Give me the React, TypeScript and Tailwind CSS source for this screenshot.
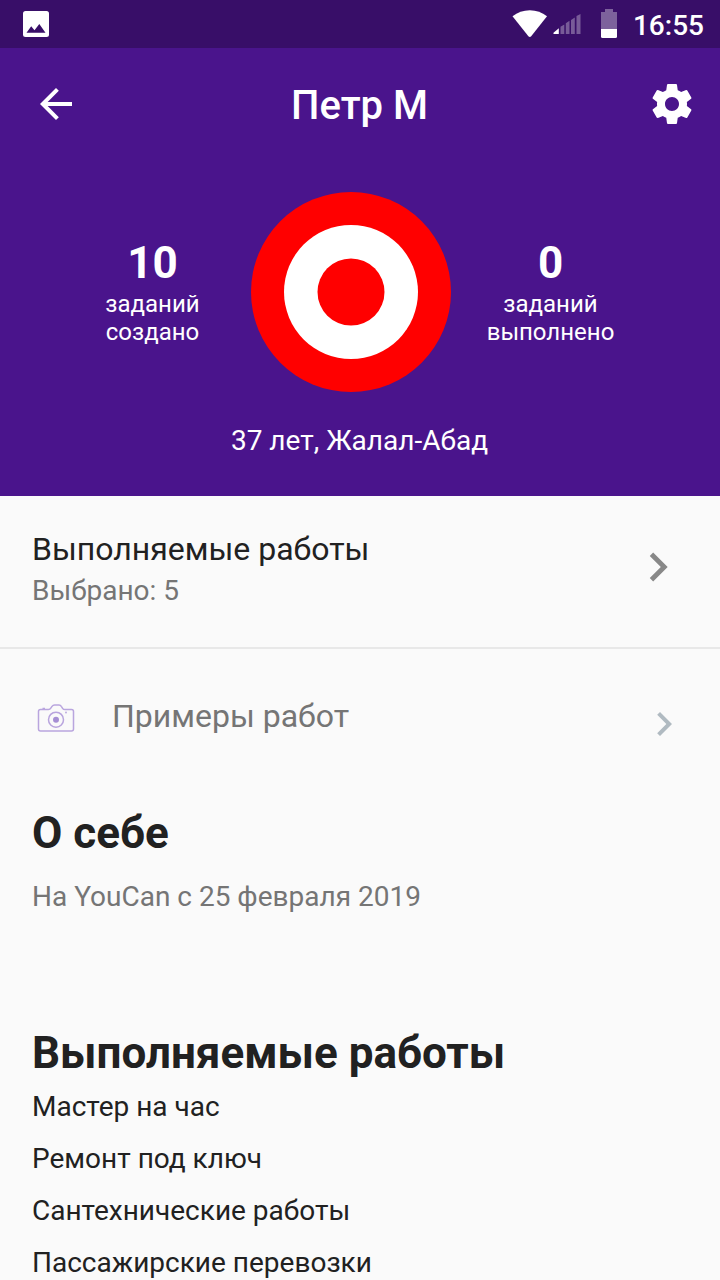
import React from 'react';
import { MdArrowBack, MdChevronRight } from 'react-icons/md';

const works = ['Мастер на час', 'Ремонт под ключ', 'Сантехнические работы', 'Пассажирские перевозки'];

const GearIcon: React.FC = () => (
  <svg width="48" height="48" viewBox="0 0 24 24" fill="currentColor">
    <path d="M19.43 12.98c.04-.32.07-.64.07-.98s-.03-.66-.07-.98l2.11-1.65c.19-.15.24-.42.12-.64l-2-3.46c-.12-.22-.39-.3-.61-.22l-2.49 1c-.52-.4-1.08-.73-1.69-.98l-.38-2.65C14.460 2.180 14.250 2 14 2h-4c-.25 0-.46.18-.49.42l-.38 2.650c-.61.25-1.170.59-1.690.98l-2.490-1c-.23-.09-.49 0-.61.22l-2 3.460c-.13.22-.07.49.12.64l2.110 1.650c-.04.32-.07.65-.07.98s.03.66.07.98l-2.110 1.650c-.19.15-.24.42-.12.64l2 3.460c.12.22.39.3.61.22l2.490-1c.52.4 1.080.73 1.690.98l.38 2.650c.03.24.24.42.49.42h4c.25 0 .46-.18.49-.42l.38-2.650c.61-.25 1.170-.59 1.690-.98l2.490 1c.23.09.49 0 .61-.22l2-3.460c.12-.22.07-.49-.12-.64l-2.110-1.650zM12 15.500c-1.930 0-3.500-1.570-3.500-3.500s1.570-3.500 3.500-3.500 3.500 1.570 3.500 3.500-1.570 3.500-3.500 3.500z" />
  </svg>
);

const CameraIcon: React.FC = () => (
  <svg width="40" height="32" viewBox="0 0 40 32" fill="none" stroke="#b9a5de" strokeWidth="1.5">
    <path d="M4.500 7.500h8q1.500 0 2.300-1.400l1.200-1.700Q17 3 18.500 3h4.500q1.500 0 2.300 1.300l1.300 2q.8 1.200 2.300 1.200h6.600q2 0 2 2v17.500q0 2-2 2h-31q-2 0-2-2v-17.500q0-2 2-2z" />
    <path d="M6.500 6.500h2.500" />
    <circle cx="20" cy="17.700" r="7.500" />
    <circle cx="20" cy="17.700" r="3" fill="#a68fd4" stroke="none" />
    <circle cx="30" cy="10.500" r="0.900" fill="#b9a5de" stroke="none" />
  </svg>
);

const StatusBar: React.FC = () => (
  <div className="flex h-12 items-center bg-[#380e68] pl-[23px] pr-4 text-white">
    <svg width="26" height="26" viewBox="0 0 26 26">
      <rect width="26" height="26" rx="2.500" fill="#fff" />
      <path d="M3.500 21.700l4.700-6.500 3.300 4L16.300 13l6.200 8.700z" fill="#380e68" />
    </svg>
    <svg className="ml-auto" width="36" height="28" viewBox="0 0 36 28">
      <path d="M0.500 6.300Q8 0.300 17.800 0.300T35 6.300L19.200 26.300q-1.400 1.500-2.800 0z" fill="#fff" />
    </svg>
    <svg className="ml-[5px]" width="28" height="20" viewBox="0 0 28 20" fill="#fff">
      <path d="M0.500 20v-1.300L5.800 14.300V20z" />
      <path opacity="0.32" d="M7.500 12.800l3.800-2.300V20H7.500zM12.800 9.200l3.700-2.500V20h-3.700zM18 6l3.800-2.500V20H18zM23.500 2L27.500 0v20h-4z" />
    </svg>
    <svg className="mb-px ml-5" width="16" height="29" viewBox="0 0 16 29" fill="#fff">
      <path opacity="0.35" d="M4 0h8v3h4v17H0V3h4z" />
      <path d="M0 20h16v7.500q0 1.500-1.500 1.500h-13Q0 29 0 27.500z" />
    </svg>
    <span className="ml-4 pt-1 text-[28px] font-medium leading-none">16:55</span>
  </div>
);

interface StatProps {
  value: number;
  label: string;
}

const Stat: React.FC<StatProps> = ({ value, label }) => (
  <div className="flex w-[140px] flex-col items-center pl-px pt-[45px] text-center">
    <span className="text-[44px] font-bold leading-[52px]">{value}</span>
    <span className="mt-px text-2xl leading-7">
      заданий
      <br />
      {label}
    </span>
  </div>
);

const App: React.FC = () => {
  return (
    <div className="h-[1280px] w-[720px] overflow-hidden bg-[#fafafa] font-['Roboto',sans-serif] text-[#212121]">
      <StatusBar />

      {/* Profile header */}
      <header className="h-[448px] bg-[#4a148c] text-white">
        <div className="flex h-28 items-center justify-between pl-8 pr-6">
          <MdArrowBack size={48} />
          <h1 className="mr-[9px] pt-1 text-[40px] font-medium leading-none">Петр М</h1>
          <GearIcon />
        </div>
        <div className="mt-8 flex justify-center gap-[29px] pr-[18px]">
          <Stat value={10} label="создано" />
          <svg width="200" height="200" viewBox="0 0 200 200">
            <circle cx="100" cy="100" r="100" fill="#f00" />
            <circle cx="100" cy="100" r="67" fill="#fff" />
            <circle cx="100" cy="100" r="33.500" fill="#f00" />
          </svg>
          <Stat value={0} label="выполнено" />
        </div>
        <p className="mt-[33px] pr-px text-center text-[28px] leading-8">37 лет, Жалал-Абад</p>
      </header>

      {/* Selected works */}
      <section className="flex h-[151px] items-center justify-between pb-[9px] pl-8 pr-[33px]">
        <div className="pt-[7px]">
          <p className="text-[32px] leading-[41px]">Выполняемые работы</p>
          <p className="text-[28px] leading-[42px] text-[#757575]">Выбрано: 5</p>
        </div>
        <MdChevronRight size={58} className="text-[#888888]" />
      </section>
      <div className="h-[2px] bg-[#e8e8e8]" />

      {/* Work samples */}
      <section className="flex h-[136px] items-center pl-9 pr-8">
        <div className="mt-[2px]">
          <CameraIcon />
        </div>
        <p className="mb-[2px] ml-9 flex-1 text-[32px] leading-10 text-[#757575]">Примеры работ</p>
        <MdChevronRight size={48} className="mt-[13px] text-[#b0bac1]" />
      </section>

      {/* About */}
      <section className="h-[241px] px-8 pt-[21px]">
        <h2 className="text-[44px] font-bold leading-[54px]">О себе</h2>
        <p className="mt-[21px] text-[28px] leading-8 text-[#757575]">На YouCan с 25 февраля 2019</p>
      </section>

      <section className="px-8">
        <h2 className="text-[44px] font-bold leading-[54px]">Выполняемые работы</h2>
        <ul className="pt-px">
          {works.map((work) => (
            <li key={work} className="h-[52px] text-[28px] leading-[52px]">
              {work}
            </li>
          ))}
        </ul>
      </section>
    </div>
  );
};

export default App;
